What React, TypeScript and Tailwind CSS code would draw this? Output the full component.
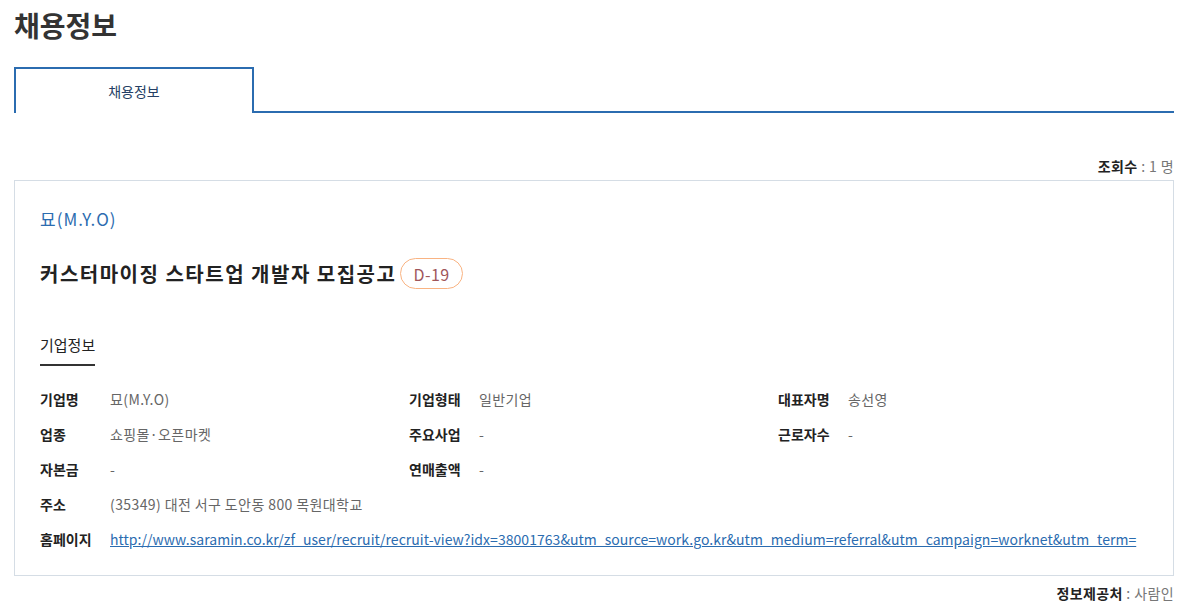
const font = {
  fontFamily: '"Noto Sans CJK KR", "Noto Sans", sans-serif',
};

type Field = { label: string; value: string };

const rows: Field[][] = [
  [
    { label: "기업명", value: "묘(M.Y.O)" },
    { label: "기업형태", value: "일반기업" },
    { label: "대표자명", value: "송선영" },
  ],
  [
    { label: "업종", value: "쇼핑몰·오픈마켓" },
    { label: "주요사업", value: "-" },
    { label: "근로자수", value: "-" },
  ],
  [
    { label: "자본금", value: "-" },
    { label: "연매출액", value: "-" },
  ],
];

function InfoCell({ label, value }: Field) {
  return (
    <div className="flex w-[369px] items-center text-[14px] leading-[20px]">
      <span className="w-[70px] shrink-0 font-bold text-[#222]">{label}</span>
      <span className="tracking-[0.4px] text-[#666]">{value}</span>
    </div>
  );
}

export default function App() {
  const url =
    "http://www.saramin.co.kr/zf_user/recruit/recruit-view?idx=38001763&utm_source=work.go.kr&utm_medium=referral&utm_campaign=worknet&utm_term=";

  return (
    <div style={font} className="bg-white pl-[14px] pr-[7px] pt-[7px] text-[#333]">
      <h1 className="text-[28px] font-bold leading-[36px] text-[#333]">채용정보</h1>

      {/* tabs */}
      <div className="mt-[24px] flex h-[46px]">
        <div className="flex w-[240px] items-center justify-center border-2 border-b-0 border-[#2b6cb0] text-[14px] text-[#253f64]">
          채용정보
        </div>
        <div className="flex-1 border-b-2 border-[#2b6cb0]" />
      </div>

      <div className="mt-[43px] text-right text-[14px] leading-[20px] tracking-[0.4px]">
        <span className="font-bold text-[#222]">조회수</span>
        <span className="text-[#777]"> : 1 명</span>
      </div>

      {/* card */}
      <div className="mt-[4px] border border-[#d5dde5] px-[25px] pb-[26px] pt-[26px]">
        <div className="text-[17px] leading-[24px] tracking-[1px] text-[#2b6cb0]">묘(M.Y.O)</div>

        <div className="mt-[27px] flex h-[31px] items-center gap-[4px]">
          <span className="text-[20px] font-bold tracking-[1.5px] text-[#222]">
            커스터마이징 스타트업 개발자 모집공고
          </span>
          <span className="flex h-[31px] items-center rounded-full border border-[#f9b382] px-[12px] text-[16px] tracking-[0.5px] text-[#a0565a]">
            D-19
          </span>
        </div>

        <div className="mt-[45px] inline-block border-b-2 border-[#333] pb-[8px] text-[15px] leading-[22px] text-[#222]">
          기업정보
        </div>

        <div className="mt-[23px] flex flex-col gap-[15px]">
          {rows.map((r, i) => (
            <div key={i} className="flex">
              {r.map((f) => (
                <InfoCell key={f.label} {...f} />
              ))}
            </div>
          ))}
          <div className="flex items-center text-[14px] leading-[20px]">
            <span className="w-[70px] shrink-0 font-bold text-[#222]">주소</span>
            <span className="tracking-[0.4px] text-[#666]">(35349) 대전 서구 도안동 800 목원대학교</span>
          </div>
          <div className="flex items-center text-[14px] leading-[20px]">
            <span className="w-[70px] shrink-0 font-bold text-[#222]">홈페이지</span>
            <a href="#" className="whitespace-nowrap tracking-[0.04px] text-[#2b6cb0] underline">
              {url}
            </a>
          </div>
        </div>
      </div>

      <div className="mt-[7px] text-right text-[14px] leading-[20px] tracking-[0.4px]">
        <span className="font-bold text-[#222]">정보제공처</span>
        <span className="text-[#777]"> : 사람인</span>
      </div>
    </div>
  );
}
